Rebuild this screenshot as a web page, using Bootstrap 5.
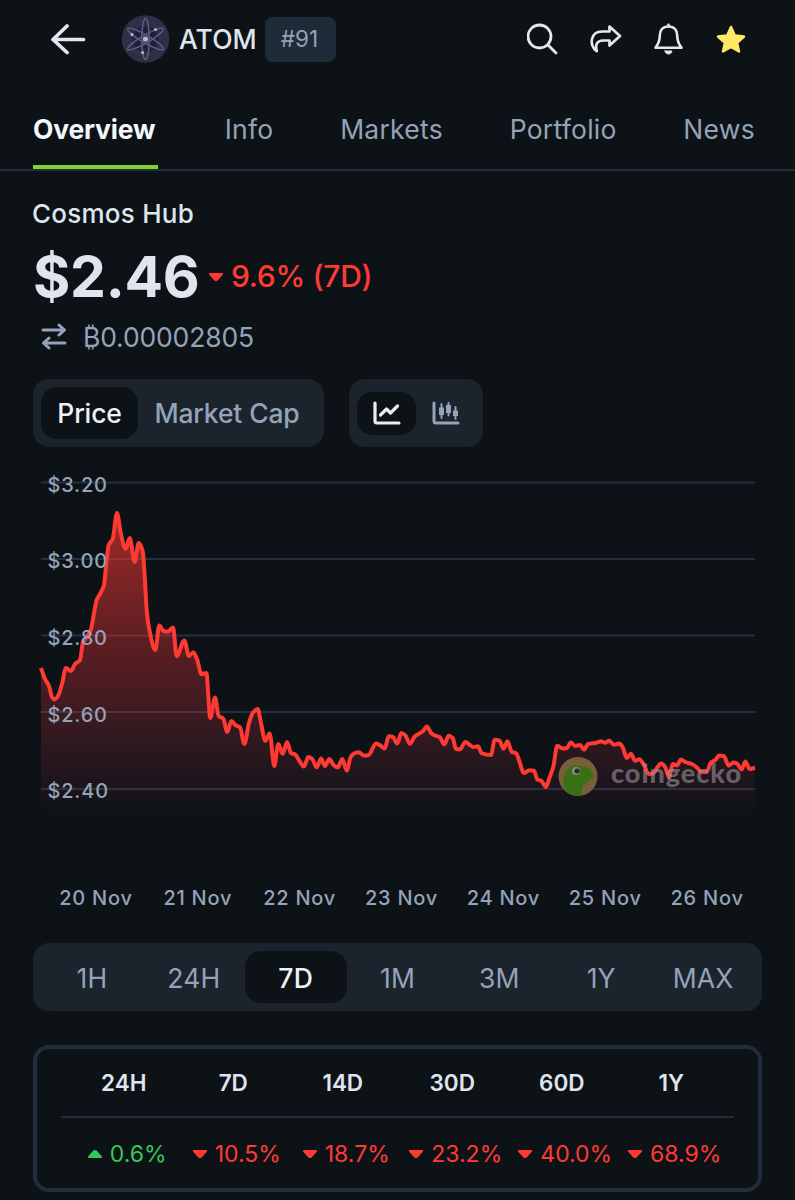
<!DOCTYPE html>
<html lang="en" data-bs-theme="dark">
<head>
<meta charset="utf-8">
<meta name="viewport" content="width=device-width, initial-scale=1">
<title>ATOM – Cosmos Hub</title>
<link href="https://cdn.jsdelivr.net/npm/bootstrap@5.3.0/dist/css/bootstrap.min.css" rel="stylesheet">
<style>
  :root { --ink:#0d1217; --panel:#1b232d; --line:#212d3b; --muted:#94a3b8; --light:#dfe5ee; --down:#ff3a33; --up:#34c759; }
  body { background:var(--ink); color:var(--light); font-family:Inter,"Liberation Sans",sans-serif; font-size:26px; font-weight:400; line-height:1; overflow:hidden; }
  svg { display:block; flex:none; }
  .topbar { height:78px; padding:0 49px 0 49px; }
  .rank { width:71px; height:45px; border-radius:8px; background:#1f2b38; color:var(--muted); font-size:22.5px; margin-left:8px; padding-right:2px; }
  .ticker { font-size:26.5px; font-weight:500; letter-spacing:.1px; margin-left:10px; }
  .tabs { height:93px; padding:0 40px 0 33px; border-bottom:2px solid var(--line); }
  .tabs .nav-link { padding:37px 0 0; height:91px; color:var(--muted); font-size:26.5px; line-height:28px; letter-spacing:.25px; }
  .tabs .nav-link.active { color:#f3f6fa; font-weight:700; border-bottom:4px solid #80d535; width:125px; letter-spacing:-.2px; white-space:nowrap; }
  .content-pad { padding:0 33px; }
  .coin { height:86px; line-height:86px; font-size:26px; font-weight:500; letter-spacing:.25px; margin-left:-1px; }
  .quote { height:40px; }
  .price { font-size:57px; font-weight:700; letter-spacing:-.25px; width:175px; position:relative; top:-1px; }
  .arrow { color:var(--down); }
  .delta { color:var(--down); font-size:30px; font-weight:500; letter-spacing:-.3px; margin-left:7px; position:relative; top:-1px; }
  .btc { height:82px; color:var(--muted); font-size:26.5px; letter-spacing:-.15px; padding:0 0 2px 8px; }
  .seg { background:var(--panel); border-radius:16px; height:68px; padding:8px; color:var(--muted); }
  .seg-item { border-radius:16px; height:52px; font-size:26.5px; font-weight:500; letter-spacing:-.15px; }
  .seg-item.on { background:var(--ink); color:#eef2f7; }
  .seg-icon { width:59px; height:43px; border-radius:15px; }
  .seg-icon.on { background:var(--ink); color:#e8edf4; }
  .dates { height:40px; padding-left:12px; width:725px; padding-top:1px; color:var(--muted); font-size:20px; font-weight:500; letter-spacing:.75px; }
  .ranges { margin-top:26px; width:729px; }
  .ranges .seg-item { padding-top:2px; font-weight:400; letter-spacing:.2px; }
  .ranges .seg-item.on { font-weight:500; }
  .changes { width:729px; height:147px; margin-top:34px; border:4px solid var(--line); border-radius:16px; padding:0 24px; }
  .changes .rowline { height:69px; border-bottom:2px solid var(--line); font-size:22.5px; font-weight:600; padding:2px 8px 0; }
  .changes .values { height:70px; font-size:23px; padding:2px 5px 0 11px; color:var(--down); letter-spacing:0; }
  .cell { flex:1 1 0; display:flex; justify-content:center; align-items:center; gap:7px; white-space:nowrap; }
  .gain { color:var(--up); }
  .axis { fill:var(--muted); font-size:20px; font-weight:500; letter-spacing:.8px; }
</style>
</head>
<body>
<svg width="0" height="0" class="position-absolute">
  <symbol id="down" viewBox="0 0 16 10"><path d="M2 1h12q2 .6.6 2L9.6 8.4q-1.6 1.4-3.2 0L1.4 3Q0 1.600 2 1z" fill="currentColor"/></symbol>
</svg>

<header class="topbar d-flex align-items-center">
  <svg width="38" height="32" viewBox="0 0 38 32" fill="none" stroke="#e2e8f0" stroke-width="3.700" stroke-linecap="round" stroke-linejoin="round"><path d="M18 3 4 16.500l14 13M4 16.500h30.500"/></svg>
  <svg style="margin-left:34px" width="48" height="48" viewBox="0 0 48 48">
    <circle cx="24.500" cy="24" r="23.800" fill="#2f3047"/><circle cx="24.500" cy="24" r="13" fill="#1f2039"/>
    <g fill="none" stroke="#5d5e80" stroke-width="1.500"><ellipse cx="24.500" cy="24" rx="3.700" ry="20.500"/><ellipse cx="24.500" cy="24" rx="3.900" ry="20.500" transform="rotate(60 24.500 24)"/><ellipse cx="24.500" cy="24" rx="3.900" ry="20.500" transform="rotate(120 24.500 24)"/></g>
    <g fill="#b9bace"><circle cx="24.500" cy="24" r="2.600"/><circle cx="34.500" cy="14.500" r="1.500"/><circle cx="11" cy="19.500" r="1.500"/><circle cx="21.500" cy="37.500" r="1.500"/></g>
  </svg>
  <span class="ticker">ATOM</span>
  <span class="rank d-flex align-items-center justify-content-center">#91</span>
  <div class="d-flex align-items-center ms-auto" style="gap:31px">
    <svg width="32" height="32" viewBox="1 0 32 32" fill="none" stroke="#e2e8f0" stroke-width="2.800" stroke-linecap="round"><circle cx="13.500" cy="13.500" r="11.500"/><path d="m22 22 8 8"/></svg>
    <svg width="32" height="32" viewBox="1 0 32 32" fill="none" stroke="#e2e8f0" stroke-width="2.700" stroke-linecap="round" stroke-linejoin="round"><path d="M20.500 3.500 31 13 20.500 22.500v-5H14c-6 0-8 4-6.200 10.700C3.500 25.500 2 20 3 16 4.200 10.500 8 8.500 13 8.500h7.500z"/></svg>
    <svg width="32" height="32" viewBox="0.500 0 32 32" fill="none" stroke="#e2e8f0" stroke-width="2.600" stroke-linecap="round" stroke-linejoin="round"><path d="M16 3.500c-6 0-8.700 4-8.700 9 0 7-2.300 9.500-4.300 12.200h26c-2-2.700-4.300-5.200-4.300-12.200 0-5-2.700-9-8.700-9z"/><path d="M16 1.800v1.500"/><path d="M12.500 28h7c-.5 2-1.700 3-3.500 3s-3-1-3.500-3z" fill="#e2e8f0" stroke-width="1"/></svg>
    <svg width="30" height="30" viewBox="0 0 30 30"><path d="m15 3 3.800 8.500 9.200 1-6.900 6.200L23 27.500 15 23l-8 4.500 1.900-8.800L2 12.500l9.200-1z" fill="#ffe866" stroke="#ffe866" stroke-width="2.500" stroke-linejoin="round"/></svg>
  </div>
</header>

<nav class="nav tabs justify-content-between flex-nowrap">
  <a class="nav-link active" href="#">Overview</a>
  <a class="nav-link" href="#">Info</a>
  <a class="nav-link" href="#">Markets</a>
  <a class="nav-link" href="#">Portfolio</a>
  <a class="nav-link" href="#">News</a>
</nav>

<main class="content-pad">
  <div class="coin">Cosmos Hub</div>
  <div class="quote d-flex align-items-center">
    <span class="price">$2.46</span>
    <svg class="arrow" width="16" height="10"><use href="#down"/></svg>
    <span class="delta">9.6% (7D)</span>
  </div>
  <div class="btc d-flex align-items-center">
    <svg width="26" height="28" viewBox="0 0 26 28" fill="none" stroke="currentColor" stroke-width="3" stroke-linecap="round" stroke-linejoin="round"><path d="M2 7h21M18 2l5.500 5-5.500 5M24 20H3M8 15l-5.500 5 5.500 5"/></svg>
    <span style="margin-left:16px">₿0.00002805</span>
  </div>
  <div class="d-flex">
    <div class="seg d-flex" style="width:291px">
      <div class="seg-item on d-flex align-items-center justify-content-center" style="width:97px">Price</div>
      <div class="seg-item d-flex align-items-center justify-content-center text-nowrap" style="width:178px">Market Cap</div>
    </div>
    <div class="seg d-flex align-items-center" style="width:134px;margin-left:25px">
      <div class="seg-icon on d-flex align-items-center justify-content-center">
        <svg width="28" height="24" viewBox="0 0 28 24" fill="none" stroke="currentColor" stroke-width="3.200" stroke-linecap="round" stroke-linejoin="round"><path d="M2 2v18q0 2 2 2h22"/><path d="m7.500 14 6-6 4 4 7-7" stroke-width="3.200"/></svg>
      </div>
      <div class="seg-icon d-flex align-items-center justify-content-center">
        <svg width="28" height="24" viewBox="0 0 28 24" fill="none" stroke="currentColor" stroke-width="3" stroke-linecap="round"><path d="M2 2v18q0 2 2 2h22"/><path d="M9.500 3v14M16.500 2v12.500M23.500 6v12" stroke-width="2"/><path d="M9.500 6.500v7.500M16.500 4v8M23.500 9.500v5.500" stroke-width="5" stroke-linecap="butt"/></svg>
      </div>
    </div>
  </div>

  <!-- Seven-day price chart -->
  <svg id="chart" width="729" height="430" viewBox="33 447 729 430">
    <defs><linearGradient id="fade" gradientUnits="userSpaceOnUse" x1="0" y1="512" x2="0" y2="816"><stop offset="0" stop-color="#ff3a33" stop-opacity=".6"/><stop offset=".5" stop-color="#ff3638" stop-opacity=".29"/><stop offset=".9" stop-color="#ff4060" stop-opacity=".06"/><stop offset="1" stop-color="#ff4060" stop-opacity="0"/></linearGradient></defs>
    <path d="M41 482.500H755M41 559H755M41 635.500H755M41 712H755M41 789H755" stroke="#242f40" stroke-width="2"/>
    <path id="area" fill="url(#fade)"/>
    <path id="line" fill="none" stroke="#ff3a33" stroke-width="4" stroke-linejoin="round"/>
    <g class="axis"><text x="47.500" y="491.500">$3.20</text><text x="47.500" y="568">$3.00</text><text x="47.500" y="644.500">$2.80</text><text x="47.500" y="721.500">$2.60</text><text x="47.500" y="797.500">$2.40</text></g>
    <circle cx="578" cy="776.500" r="19.500" fill="#76603a"/>
    <path d="M568 793c-5-4-6-12-3-19 3-8 9-10 15-7.500 6-1 9 1.500 12 5.500 2 3 2 5-1 7.500-5 3-8.500 5-9 9.500-.5 2 0 4 0 6.500-5 1.200-9.500.5-14-2.500z" fill="#3a7015"/>
    <circle cx="576" cy="771" r="4" fill="#8b8982"/><circle cx="577" cy="771" r="2.500" fill="#222c1b"/>
    <text x="611" y="783" textLength="130" fill="#9a9298" fill-opacity=".62" font-family="Lato" font-weight="900" font-size="27">coingecko</text>
  </svg>

  <div class="dates d-flex align-items-center">
    <span class="cell">20 Nov</span><span class="cell">21 Nov</span><span class="cell">22 Nov</span><span class="cell">23 Nov</span><span class="cell">24 Nov</span><span class="cell">25 Nov</span><span class="cell">26 Nov</span>
  </div>

  <div class="seg ranges d-flex">
    <span class="seg-item cell">1H</span><span class="seg-item cell">24H</span><span class="seg-item cell on">7D</span><span class="seg-item cell">1M</span><span class="seg-item cell">3M</span><span class="seg-item cell">1Y</span><span class="seg-item cell">MAX</span>
  </div>

  <section class="changes">
    <div class="rowline d-flex"><span class="cell">24H</span><span class="cell">7D</span><span class="cell">14D</span><span class="cell">30D</span><span class="cell">60D</span><span class="cell">1Y</span></div>
    <div class="values d-flex">
      <span class="cell gain"><svg width="16" height="10" style="transform:rotate(180deg)"><use href="#down"/></svg>0.6%</span>
      <span class="cell"><svg width="16" height="10"><use href="#down"/></svg>10.5%</span>
      <span class="cell"><svg width="16" height="10"><use href="#down"/></svg>18.7%</span>
      <span class="cell"><svg width="16" height="10"><use href="#down"/></svg>23.2%</span>
      <span class="cell"><svg width="16" height="10"><use href="#down"/></svg>40.0%</span>
      <span class="cell"><svg width="16" height="10"><use href="#down"/></svg>68.9%</span>
    </div>
  </section>
</main>

<script src="https://cdn.jsdelivr.net/npm/bootstrap@5.3.0/dist/js/bootstrap.bundle.min.js"></script>
<script>
  const raw = "41,668 45,679 49,686 52,697 54.500,699.500 58,696 62,684 66,668 71,671 75,664 80,660 83,642 86,638 90.700,630 96.700,600 100,594 104,585 106,567 108.700,545 112.700,539 117,513 120.700,533 125.700,549 129.700,538 134.700,562 138.700,543 142.700,551 144.700,577 146.700,610 149,628 155.300,650 159.300,625.500 163.300,631 167.700,631.700 173,627.500 176.700,656 184.300,640.500 189,656 193.300,652.300 197.300,660 201.300,674 206.300,673 210.300,718 215,697.500 218.700,716 223.300,718.700 227.300,732 231.300,721 235.700,725.300 240,727.300 244.300,744 249,723 252.700,713 257.700,709 261,723 265.300,741 269.700,733.500 274.300,766 278.300,744 282.700,754 287,742 291,753 295,754.300 299.300,760.700 304,766.500 308.300,757 312.300,759 316.700,767.500 321,758.500 325,766 329.300,759 333.300,764.700 337.700,767.500 342.300,759 346.700,770.500 350.700,757 354.300,753.300 359,752.300 363.700,755.500 368.300,755.300 376,743.500 380.700,745.700 384.700,748.500 388.700,736.300 392.700,736.700 397.300,743.500 401.300,733 405.300,735.300 410,743.800 414.700,736.500 422.700,731.300 427,726.500 431.300,733.300 435.300,735.700 439.700,737 444.300,744.300 448.700,735.700 452.700,738 456,749 460,749.300 465.300,742 473.300,747 478,746.300 481.700,753.300 491,755 494.700,739.700 499.300,740.700 503.700,748.700 507.300,741.200 511.700,751.700 516,753.300 524.300,773 529.300,770.300 534,770.700 537.300,779.500 541.300,780.700 546,787 549.300,778.300 553.300,766.700 557.300,745.700 562.700,748.500 567,748 570.700,742.500 575.300,746 580,744.900 584,749.500 588,744 596.700,742.700 601,741.300 605,742.700 609.300,740.800 614,744.800 619.300,743.500 622.700,747.300 626.700,758 631,753.800 635,760.800 639.300,759.300 644,765 648.700,774 653.300,773.300 657.300,767.300 661.300,763.600 665,766.700 669,777 673,764 677,765.500 681,759.600 685.300,762 691.700,764 696.700,767.300 701.700,772 706.700,772 710.700,762.700 715.300,760 719,755.600 724,756.300 728.700,765.700 733.300,762.600 736.700,763.300 741.700,769.500 745.300,761.500 749.700,769 755,767.700";
  const p = raw.split(" ").map(s => s.split(",").map(Number));
  // Monotone cubic interpolation keeps the curve smooth without overshooting
  const slope = p.slice(1).map((q, i) => (q[1] - p[i][1]) / (q[0] - p[i][0]));
  const m = p.map((_, i) => {
    const a = slope[i - 1], b = slope[i];
    if (a === undefined) return b;
    if (b === undefined) return a;
    return a * b <= 0 ? 0 : 2 * a * b / (a + b);
  });
  let d = `M${p[0]}`;
  for (let i = 1; i < p.length; i++) {
    const h = (p[i][0] - p[i - 1][0]) / 3;
    d += `C${p[i - 1][0] + h},${p[i - 1][1] + m[i - 1] * h} ${p[i][0] - h},${p[i][1] - m[i] * h} ${p[i]}`;
  }
  document.getElementById("line").setAttribute("d", d);
  document.getElementById("area").setAttribute("d", d + "V816H41Z");
</script>
</body>
</html>
